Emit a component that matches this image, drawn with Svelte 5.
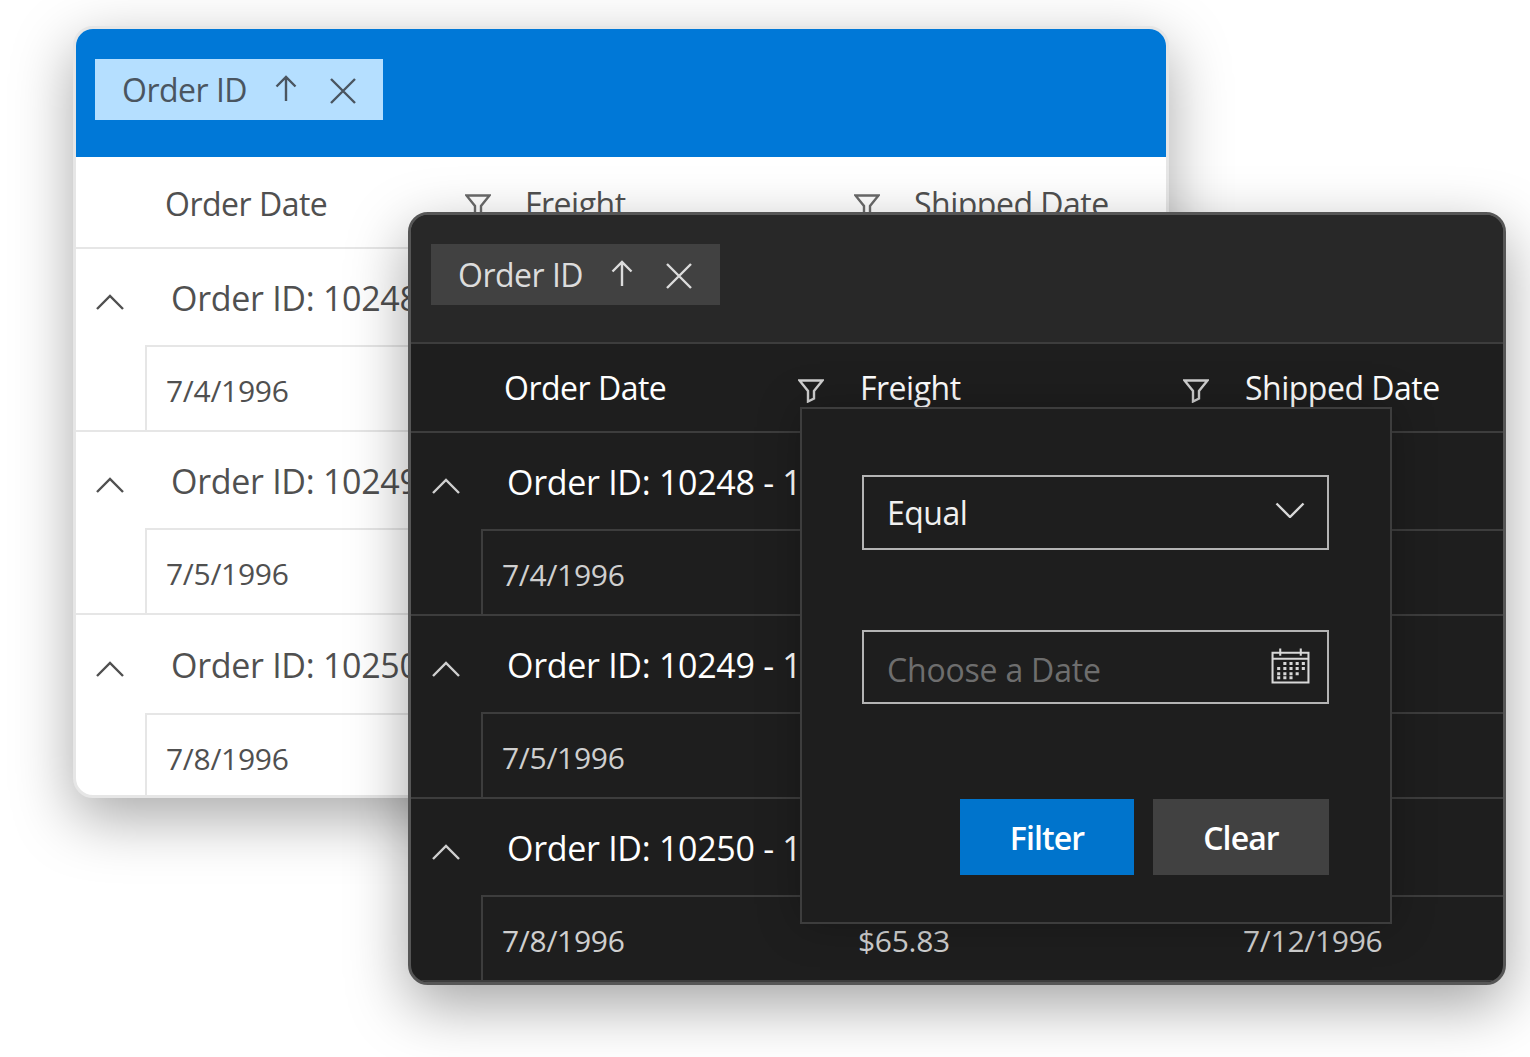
<script>
  const orders = [
    { id: 10248, date: "7/4/1996", freight: "$32.38", shipped: "7/16/1996" },
    { id: 10249, date: "7/5/1996", freight: "$11.61", shipped: "7/10/1996" },
    { id: 10250, date: "7/8/1996", freight: "$65.83", shipped: "7/12/1996" }
  ];
  const columns = ["Order Date", "Freight", "Shipped Date"];
</script>

{#snippet grid(theme)}
  <section class="card {theme}">
    <header class="toolbar">
      <div class="chip">
        <span>Order ID</span>
        <svg class="arrow" viewBox="0 0 24 28"><path d="M12 26V2M2.5 11.5 12 2l9.500 9.500" /></svg>
        <svg class="close" viewBox="0 0 28 28"><path d="M2 2l24 24M26 2 2 26" /></svg>
      </div>
    </header>
    <div class="head">
      {#each columns as col, i}
        <div class="th">
          <span>{col}</span>
          {#if i < 2}
            <svg class="funnel" viewBox="0 0 26 24"><path d="M1.500 1.500h23L16 12v7.500l-6 3V12z" /></svg>
          {/if}
        </div>
      {/each}
    </div>
    {#each orders as order}
      <div class="row">
        <div class="group">
          <svg class="chevron" viewBox="0 0 30 18"><path d="M2 16 15 3l13 13" /></svg>
          <span class="title">Order ID: {order.id} - 1 item</span>
        </div>
        <div class="detail">
          <div class="td">{order.date}</div>
          <div class="td">{order.freight}</div>
          <div class="td">{order.shipped}</div>
        </div>
      </div>
    {/each}
    {#if theme === "dark"}
      <div class="popup">
        <div class="field">
          <span class="value">Equal</span>
          <svg class="caret" viewBox="0 0 30 16"><path d="M1.500 1.500 15 15 28.500 1.500" /></svg>
        </div>
        <div class="field">
          <span class="placeholder">Choose a Date</span>
          <svg class="calendar" viewBox="0 0 38 36">
            <path d="M1.500 5.500h35v29h-35zM1.500 11.500h35M9 1.500v7M29 1.500v7" />
            <path class="dots" d="M12 16h3M18 16h3M24 16h3M30 16h3M6 21h3M12 21h3M18 21h3M24 21h3M30 21h3M6 26h3M12 26h3M18 26h3M24 26h3M6 30h3M12 30h3M18 30h3" />
          </svg>
        </div>
        <div class="actions">
          <button class="primary">Filter</button>
          <button class="secondary">Clear</button>
        </div>
      </div>
    {/if}
  </section>
{/snippet}

<main class="canvas">
  {@render grid("light")}
  {@render grid("dark")}
</main>

<style>
  :global(body) {
    background: #fff;
    font-family: "Open Sans", "Noto Sans", sans-serif;
  }

  .canvas {
    position: relative;
    width: 1530px;
    height: 1057px;
    overflow: hidden;
  }

  svg {
    display: block;
    flex: none;
    fill: none;
    stroke: currentColor;
    stroke-width: 2.4;
  }

  .card {
    position: absolute;
    display: flex;
    flex-direction: column;
    box-sizing: border-box;
    border-style: solid;
    border-width: 3px;
    border-radius: 20px;
    overflow: hidden;
    letter-spacing: -0.5px;
  }

  .light {
    left: 73px;
    top: 26px;
    width: 1096px;
    height: 772px;
    --line: #e6e6e6;
    --text: #505050;
    --muted: #505050;
    --pad: 89px;
    --col-1: 360px;
    --col-2: 389px;
    --detail-1: 359px;
    --detail-pad: 19px;
    --indent: 69px;
    --group-pad: 19px;
    --th-pad: 34px;
    --head-h: 92px;
    --head-top: 2px;
    background: #fff;
    border-color: #e6e6e6;
    color: var(--text);
    box-shadow: 0 20px 60px rgba(0, 0, 0, 0.34);
  }

  .dark {
    left: 408px;
    top: 212px;
    width: 1098px;
    height: 773px;
    --line: #3d3d3d;
    --text: #fff;
    --muted: #cfcfcf;
    --pad: 93px;
    --col-1: 356px;
    --col-2: 385px;
    --detail-1: 356px;
    --detail-pad: 19px;
    --indent: 70px;
    --group-pad: 20px;
    --th-pad: 36px;
    --head-h: 89px;
    --head-top: 0px;
    background: #1e1e1e;
    border-color: #565656;
    color: var(--text);
    box-shadow: 0 20px 60px rgba(0, 0, 0, 0.36);
  }

  .toolbar {
    flex: none;
    display: flex;
    align-items: flex-start;
    box-sizing: border-box;
  }

  .light .toolbar {
    height: 128px;
    padding: 30px 19px;
    background: #0078d7;
  }

  .dark .toolbar {
    height: 129px;
    padding: 29px 20px;
    background: #282828;
    border-bottom: 2px solid #3d3d3d;
  }

  .chip {
    display: flex;
    align-items: center;
    box-sizing: border-box;
    height: 61px;
    padding-left: 27px;
    font-size: 32px;
  }

  .light .chip {
    width: 288px;
    background: #b5dfff;
    color: #4a5560;
  }

  .dark .chip {
    width: 289px;
    background: #414141;
    color: #dcdcdc;
  }

  .arrow {
    width: 24px;
    height: 28px;
    margin: -2px 0 0 27px;
  }

  .close {
    width: 28px;
    height: 28px;
    margin: 2px 0 0 31px;
  }

  .head {
    flex: none;
    display: grid;
    grid-template-columns: var(--col-1) var(--col-2) 1fr;
    box-sizing: border-box;
    height: var(--head-h);
    padding: var(--head-top) 0 0 var(--pad);
    border-bottom: 2px solid var(--line);
  }

  .th {
    display: flex;
    align-items: center;
    justify-content: space-between;
    padding-right: var(--th-pad);
    font-size: 32px;
    white-space: nowrap;
  }

  .funnel {
    width: 26px;
    height: 24px;
    margin-top: 6px;
  }

  .dark .funnel {
    color: #d0d0d0;
  }

  .light .funnel {
    color: #6a6a6a;
  }

  .row {
    flex: none;
    border-bottom: 2px solid var(--line);
  }

  .group {
    display: flex;
    align-items: center;
    box-sizing: border-box;
    height: 96px;
    padding: 2px 0 0 var(--group-pad);
    font-size: 34px;
    letter-spacing: -0.3px;
    white-space: nowrap;
  }

  .row:last-child .group {
    height: 98px;
  }

  .chevron {
    width: 30px;
    height: 18px;
    margin: 8px 46px 0 0;
    color: var(--muted);
  }

  .detail {
    display: grid;
    grid-template-columns: var(--detail-1) var(--col-2) 1fr;
    box-sizing: border-box;
    height: 85px;
    margin-left: var(--indent);
    padding-left: var(--detail-pad);
    border-top: 2px solid var(--line);
    border-left: 2px solid var(--line);
  }

  .td {
    display: flex;
    align-items: center;
    padding-top: 4px;
    font-size: 30px;
    color: var(--muted);
    letter-spacing: -0.3px;
  }

  .popup {
    position: absolute;
    left: 389px;
    top: 192px;
    display: flex;
    flex-direction: column;
    box-sizing: border-box;
    width: 592px;
    height: 517px;
    padding: 66px 61px 47px 60px;
    background: #1e1e1e;
    border: 2px solid #3d3d3d;
    box-shadow: 0 0 40px rgba(0, 0, 0, 0.25);
  }

  .field {
    display: flex;
    align-items: center;
    justify-content: space-between;
    box-sizing: border-box;
    height: 75px;
    margin-bottom: 80px;
    padding: 0 17px 0 23px;
    border: 2px solid #b4b4b4;
    font-size: 32px;
  }

  .value {
    color: #f0f0f0;
  }

  .placeholder {
    margin-top: 6px;
    color: #6e6e6e;
    letter-spacing: -0.2px;
  }

  .caret {
    width: 30px;
    height: 16px;
    margin: -4px 5px 0 0;
    color: #d8d8d8;
  }

  .calendar {
    width: 39px;
    height: 37px;
    margin-top: -2px;
    color: #d8d8d8;
    stroke-width: 2;
  }

  .dots {
    stroke-width: 3;
  }

  .actions {
    display: flex;
    justify-content: flex-end;
    gap: 19px;
    margin-top: 15px;
  }

  button {
    height: 76px;
    border: none;
    font: inherit;
    font-size: 32px;
    font-weight: 600;
    letter-spacing: -0.9px;
    color: #fff;
  }

  .primary {
    width: 174px;
    background: #0074cc;
  }

  .secondary {
    width: 176px;
    background: #414141;
  }
</style>
